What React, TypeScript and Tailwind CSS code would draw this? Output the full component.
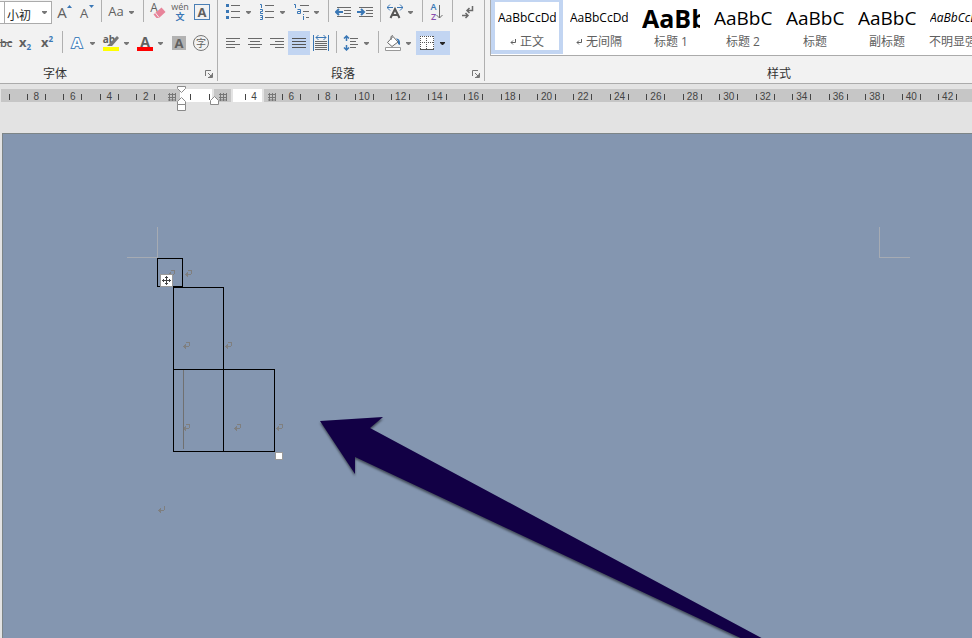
import { useState } from "react";
import type { ReactNode } from "react";

const styleItems = [
  { name: "正文", mark: true, sample: "AaBbCcDd", cls: "text-[12px]" },
  { name: "无间隔", mark: true, sample: "AaBbCcDd", cls: "text-[12px]" },
  { name: "标题 1", mark: false, sample: "AaBb", cls: "text-[25px] font-bold" },
  { name: "标题 2", mark: false, sample: "AaBbC", cls: "text-[19px]" },
  { name: "标题", mark: false, sample: "AaBbC", cls: "text-[19px]" },
  { name: "副标题", mark: false, sample: "AaBbC", cls: "text-[19px]" },
  { name: "不明显强调", mark: false, sample: "AaBbCcDd", cls: "text-[12px] italic text-[#404040]" },
];

const leftNumbers = [8, 6, 4, 2];
const rightNumbers = [6, 8, 10, 12, 14, 16, 18, 20, 22, 24, 26, 28, 30, 32, 34, 36, 38, 40, 42];

const Caret = ({ dark = false }: { dark?: boolean }) => (
  <svg width="5" height="3" viewBox="0 0 5 3" className={dark ? "text-[#262626]" : "text-[#777777]"}>
    <path d="M0 0h5v1L3 3H2L0 1z" fill="currentColor" />
  </svg>
);

const Sep = () => (
  <div className="flex h-6 w-2 shrink-0 justify-center">
    <div className="h-[22px] w-px bg-[#b0b0b0]" />
  </div>
);

type ToolProps = { label: string; children: ReactNode; menu?: boolean; active?: boolean };

const Tool = ({ label, children, menu, active }: ToolProps) => (
  <button
    type="button"
    aria-label={label}
    className={`flex h-6 shrink-0 items-center text-[#606060] ${active ? "bg-[#c2d5f2]" : ""} ${
      menu ? "w-[34px]" : "w-[22px]"
    }`}
  >
    <span className="relative flex h-6 w-[22px] items-center justify-center">{children}</span>
    {menu && (
      <span className="flex w-3 pl-[2px] pt-px">
        <Caret dark={active} />
      </span>
    )}
  </button>
);

// 16px icon made of straight strokes
const Icon = ({ children }: { children: ReactNode }) => (
  <svg width="16" height="16" viewBox="0 0 16 16" fill="none" stroke="#6a6a6a" className="shrink-0">
    {children}
  </svg>
);

const Launcher = ({ label }: { label: string }) => (
  <button type="button" aria-label={label} className="flex w-4 shrink-0 items-end pl-1">
    <svg width="8" height="8" viewBox="0 0 8 8" fill="none" stroke="#777777">
      <path d="M.5 6V.5H6M3 3l3 3M7.5 3v4.5H3" />
      <path d="M7 4v3H4z" fill="#777777" stroke="none" />
    </svg>
  </button>
);

const GroupLabel = ({ children, launcher }: { children: string; launcher?: boolean }) => (
  <div className="flex h-[14px] items-center text-[12px] leading-[14px] text-[#333333]">
    <span className="flex-1 text-center">{children}</span>
    {launcher && <Launcher label={children} />}
  </div>
);

const FontGroup = () => {
  const [size, setSize] = useState("小初");
  return (
    <section className="-ml-[91px] flex w-[309px] shrink-0 flex-col border-r border-[#b0b0b0]">
      <div className="flex h-6 items-center justify-end pr-1">
        <div className="mt-px h-[23px] w-[60px] border border-r-0 border-[#ababab] bg-white" />
        <div className="relative mr-px mt-px h-[23px] w-12 border border-[#ababab] bg-white">
          <select
            aria-label="字号"
            value={size}
            onChange={(e) => setSize(e.target.value)}
            className="h-[19px] w-full appearance-none pl-[2px] text-[12px] leading-[19px] text-[#222222] outline-none"
          >
            <option>小初</option>
            <option>一号</option>
            <option>二号</option>
          </select>
          <span className="pointer-events-none absolute right-1 top-[9px] flex">
            <Caret />
          </span>
        </div>
        <Tool label="增大字号">
          <span className="pr-1 pt-px text-[15px]">A</span>
          <svg width="5" height="3" viewBox="0 0 5 3" className="absolute right-[3px] top-[5px]">
            <path d="M0 3h5L2.5 0z" fill="#3a77b5" />
          </svg>
        </Tool>
        <Tool label="减小字号">
          <span className="pr-1 pt-1 text-[13px]">A</span>
          <svg width="5" height="3" viewBox="0 0 5 3" className="absolute right-[3px] top-[5px]">
            <path d="M0 0h5L2.5 3z" fill="#3a77b5" />
          </svg>
        </Tool>
        <Sep />
        <Tool label="更改大小写" menu>
          <span className="text-[13px]">Aa</span>
        </Tool>
        <Sep />
        <Tool label="清除格式">
          <span className="pb-2 pr-2 text-[12px]">A</span>
          <svg width="13" height="12" viewBox="0 0 13 12" className="absolute left-[6px] top-[7px]">
            <path d="M8.5.5 12.5 5 6 11H3.5L.5 7.5z" fill="#e8849a" />
            <path d="M2.5 6 6 10.5" stroke="#f2f2f2" />
          </svg>
        </Tool>
        <Tool label="拼音指南">
          <span className="flex flex-col items-center text-[9px] leading-[10px]">
            <span>wén</span>
            <span className="font-bold text-[#3a77b5]">文</span>
          </span>
        </Tool>
        <Tool label="字符边框">
          <span className="flex h-4 w-4 items-center justify-center border border-[#4a7fb5] text-[13px] font-bold leading-[14px]">
            A
          </span>
        </Tool>
      </div>
      <div className="mb-3 mt-[7px] flex h-6 items-center justify-end pr-[5px]">
        <Tool label="删除线">
          <span className="text-[11px] font-semibold line-through">abc</span>
        </Tool>
        <Tool label="下标">
          <span className="text-[13px] font-bold">x</span>
          <span className="pt-2 text-[8px] font-bold text-[#3a77b5]">2</span>
        </Tool>
        <Tool label="上标">
          <span className="text-[13px] font-bold">x</span>
          <span className="pb-2 text-[8px] font-bold text-[#3a77b5]">2</span>
        </Tool>
        <Sep />
        <Tool label="文本效果" menu>
          <svg width="20" height="20" viewBox="0 0 20 20" className="shrink-0">
            <text
              x="10"
              y="15"
              textAnchor="middle"
              fontSize="15"
              fontWeight="bold"
              fill="#ffffff"
              stroke="#4a84bd"
              strokeWidth="2"
              paintOrder="stroke"
            >
              A
            </text>
          </svg>
        </Tool>
        <Tool label="突出显示" menu>
          <span className="pb-2 pr-1 text-[10px] font-bold">ab</span>
          <svg width="16" height="16" viewBox="0 0 16 16" className="absolute left-[3px] top-1">
            <path d="M14 1 8 7l-4 4h5l7-8z" fill="#777777" />
            <path d="M0 12h16v4H0z" fill="#ffff00" />
          </svg>
        </Tool>
        <Tool label="字体颜色" menu>
          <span className="pb-1 text-[14px] font-bold">A</span>
          <span className="absolute bottom-1 h-1 w-4 bg-[#ff0000]" />
        </Tool>
        <Tool label="字符底纹">
          <span className="flex h-[14px] w-[14px] items-center justify-center bg-[#b2b2b2] text-[13px] font-bold leading-[14px]">
            A
          </span>
        </Tool>
        <Tool label="带圈字符">
          <span className="flex h-4 w-4 shrink-0 items-center justify-center rounded-full border border-[#777777] text-[10px] leading-[14px]">
            字
          </span>
        </Tool>
      </div>
      <GroupLabel launcher>字体</GroupLabel>
    </section>
  );
};

const ParagraphGroup = () => (
  <section className="flex w-[267px] shrink-0 flex-col border-r border-[#b0b0b0]">
    <div className="flex h-6 items-center pl-1">
      <Tool label="项目符号" menu>
        <Icon>
          <path d="M6 1.5h9M6 7.500h9M6 13.500h9" />
          <path d="M1 0h3v3H1zM1 6h3v3H1zM1 12h3v3H1z" fill="#3a77b5" stroke="none" />
        </Icon>
      </Tool>
      <Tool label="编号" menu>
        <Icon>
          <path d="M6 1.5h9M6 7.5h9M6 13.5h9" />
          <path d="M1 .5h1.500V4M1 5.500h2.500v2H1.500v2H4M1 11.500h2.500v4H1M1.500 13.500h2" stroke="#3a77b5" />
        </Icon>
      </Tool>
      <Tool label="多级列表" menu>
        <Icon>
          <path d="M7 1.5h9M10 7.5h6M13 13.5h3" />
          <path d="M1 .5h1.500V4M4.500 5.500h3V9.500H4.500v-2H7M10.500 10v1M10.500 12v4" stroke="#3a77b5" />
        </Icon>
      </Tool>
      <Sep />
      <Tool label="减少缩进量">
        <Icon>
          <path d="M2 3.5h14M9 6.5h7M9 9.5h7M2 12.5h14" />
          <path d="M1 8h7M4 5 1 8l3 3" stroke="#3a77b5" strokeWidth="2" />
        </Icon>
      </Tool>
      <Tool label="增加缩进量">
        <Icon>
          <path d="M2 3.5h14M9 6.5h7M9 9.5h7M2 12.5h14" />
          <path d="M0 8h7M4 5l3 3-3 3" stroke="#3a77b5" strokeWidth="2" />
        </Icon>
      </Tool>
      <Sep />
      <Tool label="中文版式" menu>
        <Icon>
          <path d="M3.5 14 8 5l4.500 9M5 11h6" strokeWidth="2" stroke="#555555" />
          <path d="M0 3.500h6M3 .5l-3 3 3 3M10 3.500h6M13 .5l3 3-3 3" stroke="#3a77b5" />
        </Icon>
      </Tool>
      <Sep />
      <Tool label="排序">
        <span className="flex flex-col items-center text-[9px] font-semibold leading-[10px]">
          <span className="text-[#3a77b5]">A</span>
          <span className="text-[#8a4fae]">Z</span>
        </span>
        <svg width="7" height="16" viewBox="0 0 7 16" fill="none" stroke="#6a6a6a">
          <path d="M3.5 1v13M.5 11l3 3 3-3" />
        </svg>
      </Tool>
      <Sep />
      <Tool label="显示编辑标记">
        <Icon>
          <path d="M13.5 2v4.500H8M10.500 4 8 6.500 10.500 9M3 11.500h6M6.500 9 9 11.500 6.500 14" strokeWidth="1.5" />
        </Icon>
      </Tool>
    </div>
    <div className="mb-3 mt-[7px] flex h-6 items-center pl-1">
      <Tool label="左对齐">
        <Icon>
          <path d="M1 3.5h14M1 6.5h9M1 9.5h14M1 12.5h9" />
        </Icon>
      </Tool>
      <Tool label="居中">
        <Icon>
          <path d="M1 3.5h14M3 6.5h10M1 9.5h14M3 12.5h10" />
        </Icon>
      </Tool>
      <Tool label="右对齐">
        <Icon>
          <path d="M1 3.5h14M6 6.5h9M1 9.5h14M6 12.5h9" />
        </Icon>
      </Tool>
      <Tool label="两端对齐" active>
        <Icon>
          <path d="M1 3.5h14M1 6.5h14M1 9.5h14M1 12.5h14" stroke="#555555" />
        </Icon>
      </Tool>
      <Tool label="分散对齐">
        <Icon>
          <path d="M2 6.500h12M2 8.500h12M2 10.500h12M2 12.500h12M2 14.500h12" />
          <path d="M.5 0v16M15.5 0v16M3 2.500h10M5.500 0 3 2.500 5.500 5M10.500 0 13 2.500 10.500 5" stroke="#3a77b5" />
        </Icon>
      </Tool>
      <Sep />
      <Tool label="行距" menu>
        <Icon>
          <path d="M7 3.5h8M7 6.5h6M7 9.5h8M7 12.5h6" />
          <path d="M3.5 1v5M1 3.500 3.500 1 6 3.500M3.500 10v5M1 12.500 3.500 15 6 12.500" stroke="#3a77b5" strokeWidth="1.5" />
        </Icon>
      </Tool>
      <Sep />
      <Tool label="底纹" menu>
        <Icon>
          <path d="M8 1.5 13 7l-6 4.500L2.500 7.500zM6 5V1.500L8 .5" fill="#ffffff" />
          <path d="M11 3.500c3 0 4.500 2 4 6.500l-2-1V6z" fill="#3a77b5" stroke="none" />
          <path d="M.5 12.500h15v3H.5z" fill="#ffffff" stroke="#999999" />
        </Icon>
      </Tool>
      <Tool label="边框" menu active>
        <svg width="14" height="14" viewBox="0 0 14 14" fill="none" stroke="#555555">
          <path d="M0 0h14v14H0z" fill="#ffffff" stroke="none" />
          <path d="M0 .5h14M.5 0v13M13.5 0v13M6.5 0v13M0 6.5h14" strokeDasharray="1 1" />
          <path d="M0 13.5h14" />
        </svg>
      </Tool>
    </div>
    <GroupLabel launcher>段落</GroupLabel>
  </section>
);

const StylesGroup = () => {
  const [selected, setSelected] = useState(0);
  return (
    <section className="w-[588px] shrink-0">
      <div className="mb-[11px] ml-[5px] flex h-14 border-b border-l border-[#ababab] bg-white">
        {styleItems.map((item, i) => (
          <button
            key={i}
            type="button"
            onClick={() => setSelected(i)}
            className={`flex h-[54px] w-[72px] shrink-0 flex-col items-center border-4 border-t-2 ${
              selected === i ? "border-[#c2d5f2]" : "border-transparent"
            }`}
          >
            <span
              className={`h-8 w-[58px] overflow-hidden whitespace-nowrap text-left font-['Open_Sans','Noto_Sans',sans-serif] leading-8 text-black ${item.cls}`}
            >
              {item.sample}
            </span>
            <span className="flex items-center gap-1 whitespace-nowrap text-[12px] leading-4 text-[#606060]">
              {item.mark && (
                <svg width="6" height="6" viewBox="0 0 6 6" fill="none" stroke="#606060">
                  <path d="M5.5 0v3.5H1M3 1.500l-2 2 2 2" />
                </svg>
              )}
              {item.name}
            </span>
          </button>
        ))}
      </div>
      <GroupLabel>样式</GroupLabel>
    </section>
  );
};

const RulerTick = () => <i className="h-[6px] w-px shrink-0 bg-[#444444]" />;

const RulerNumber = ({ n }: { n: number }) => (
  <div className="flex min-w-0 flex-1 items-center justify-center">
    <RulerTick />
    <span className="w-[17px] shrink-0 text-center">{n}</span>
    <RulerTick />
  </div>
);

const ColumnGrip = () => (
  <svg width="8" height="8" viewBox="0 0 8 8" stroke="#777777" className="shrink-0">
    <path d="M1.5 0v8M4.5 0v8M7.500 0v8M0 1.500h8M0 4.500h8M0 7h8" />
  </svg>
);

const Ruler = () => (
  <div className="relative h-[49px] shrink-0 bg-[#e3e3e3] pl-px pt-[5px]">
    <div className="flex h-[13px] font-['Liberation_Sans',sans-serif] text-[10px] leading-[11px] text-[#444444]">
      <div className="flex w-[179px] shrink-0 items-center bg-[#c6c6c6] pt-[2px]">
        <div className="flex w-[17px] pl-2">
          <RulerTick />
        </div>
        <div className="flex w-[146px]">
          {leftNumbers.map((n) => (
            <RulerNumber key={n} n={n} />
          ))}
        </div>
        <span className="ml-1">
          <ColumnGrip />
        </span>
      </div>
      <div className="flex w-8 shrink-0 items-center justify-between bg-white pl-[10px] pr-[2px] pt-[2px]">
        <RulerTick />
        <RulerTick />
      </div>
      <div className="ml-[2px] flex w-[17px] shrink-0 items-center justify-center bg-[#c6c6c6] pt-[2px]">
        <ColumnGrip />
      </div>
      <div className="ml-[2px] flex w-[29px] shrink-0 items-center bg-white pl-3 pt-[2px]">
        <RulerTick />
        <span className="w-4 text-center">4</span>
      </div>
      <div className="ml-[2px] flex min-w-0 flex-1 items-center bg-[#c6c6c6] pl-1 pr-[6px] pt-[2px]">
        <ColumnGrip />
        <div className="-ml-[3px] flex min-w-0 flex-1">
          {rightNumbers.map((n) => (
            <RulerNumber key={n} n={n} />
          ))}
        </div>
      </div>
    </div>
    {/* indent handles */}
    <svg width="9" height="25" viewBox="0 0 9 25" fill="#ffffff" stroke="#8a8a8a" className="absolute left-[177px] top-[2px]">
      <path d="M.5.5h8v2l-4 4-4-4zM.5 18.500v-3l4-4 4 4v3zM.5 18.500h8v6h-8z" />
    </svg>
    <svg width="9" height="9" viewBox="0 0 9 9" fill="#ffffff" stroke="#8a8a8a" className="absolute left-[210px] top-3">
      <path d="M.5 8.500v-4l4-4 4 4v4z" />
    </svg>
  </div>
);

const ReturnMark = ({ last = false }: { last?: boolean }) => (
  <svg width="7" height="7" viewBox="0 0 7 7" fill="#7f7f7f" shapeRendering="crispEdges">
    {!last && <path d="M3 0h4v1H3z" />}
    <path d="M6 0h1v4H6zM1 4h5v1H1zM0 4h1v1H0zM1 3h2v3H1zM2 2h1v5H2z" />
  </svg>
);

const Document = () => (
  <main className="relative ml-[2px] flex-1 overflow-hidden border-l border-t border-[#7d8587] bg-[#8496b0]">
    <div className="mt-[93px] flex justify-between pl-[124px] pr-[62px]">
      <div className="h-[31px] w-[31px] border-b border-r border-[#a6abb3]" />
      <div className="h-[31px] w-[31px] border-b border-l border-[#a6abb3]" />
    </div>
    <div className="flex pl-[154px]">
      <div className="relative flex h-[29px] w-[26px] items-center justify-end border border-black pr-[7px] pt-[2px]">
        <ReturnMark />
        <span className="absolute left-[2px] top-[15px] flex h-[13px] w-[13px] items-center justify-center border border-[#999999] bg-white">
          <svg width="9" height="9" viewBox="0 0 9 9" fill="none" stroke="#444444">
            <path d="M4.5 0v9M0 4.5h9M3 1.500h3M3 7.500h3M1.500 3v3M7.500 3v3" />
          </svg>
        </span>
      </div>
      <span className="pl-[2px] pt-3">
        <ReturnMark />
      </span>
    </div>
    <div className="relative ml-[170px] w-[111px]">
      <table className="w-[111px] table-fixed border-collapse">
        <tbody>
          <tr className="h-[82px] align-top">
            <td className="w-[50px] border border-black pl-[9px] pt-[54px]">
              <ReturnMark />
            </td>
            <td className="w-[51px] pl-px pt-[54px]">
              <ReturnMark />
            </td>
            <td />
          </tr>
          <tr className="h-[82px] align-top">
            <td className="border border-black pl-[9px] pt-[54px]">
              <ReturnMark />
            </td>
            <td className="border border-black pl-[10px] pt-[54px]">
              <ReturnMark />
            </td>
            <td className="pl-px pt-[54px]">
              <ReturnMark />
            </td>
          </tr>
        </tbody>
      </table>
      <span className="absolute bottom-[3px] left-[10px] h-[79px] w-px bg-[#707070]" />
      <span className="absolute -bottom-2 left-[102px] h-2 w-2 border border-[#999999] bg-white" />
    </div>
    <div className="ml-[155px] mt-[54px]">
      <ReturnMark last />
    </div>
    <svg width="480" height="240" viewBox="0 0 480 240" className="absolute left-[297px] top-[266px] drop-shadow-[0_2px_1px_rgba(0,0,0,0.5)]">
      <path d="M20 21 83 17 70 28 469 242H449L55 57v17z" fill="#120045" />
    </svg>
  </main>
);

const App = () => {
  return (
    <div className="flex min-h-screen flex-col overflow-hidden bg-[#e3e3e3] font-['Open_Sans','Noto_Sans_CJK_SC',sans-serif]">
      <header className="flex shrink-0 overflow-hidden border-b border-[#ababab] bg-[#f2f2f2] pb-[2px]">
        <FontGroup />
        <ParagraphGroup />
        <StylesGroup />
      </header>
      <Ruler />
      <Document />
    </div>
  );
};

export default App;
